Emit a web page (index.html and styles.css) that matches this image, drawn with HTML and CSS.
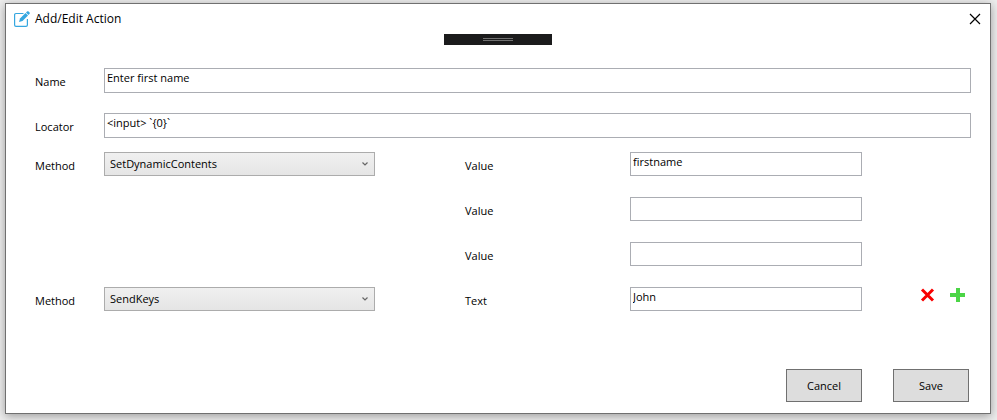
FILE: index.html
```html
<!DOCTYPE html>
<html lang="en">
<head>
<meta charset="utf-8">
<title>Add/Edit Action</title>
<link rel="stylesheet" href="styles.css">
</head>
<body>
<main class="window">
  <header class="titlebar">
    <svg class="app-icon" viewBox="0 0 16 16" aria-hidden="true">
      <path d="M9.5 2.5H2Q.6 2.5.6 3.500V14Q.6 15.400 2 15.400H12Q13.400 15.400 13.400 14V8" fill="none" stroke="#35a7e0" stroke-width="1.200"/>
      <path d="M5 11L6 7.500L11.500 2L14 4.500L8.500 10Z" fill="#35a7e0"/>
      <path d="M12 1.600L13.300.3Q14 0 14.700.6L15.600 1.500Q16 2.200 15.600 2.800L14.400 4Z" fill="#35a7e0"/>
    </svg>
    <h1 class="title">Add/Edit Action</h1>
    <button class="close" type="button" aria-label="Close">
      <svg viewBox="0 0 10 10" aria-hidden="true"><path d="M0 0L10 10M10 0L0 10" stroke="#000" stroke-width="1.200"/></svg>
    </button>
  </header>
  <div class="grip"><span class="grip-lines"></span></div>
  <form class="form">
    <div class="row wide">
      <label for="name">Name</label>
      <input id="name" type="text" value="Enter first name">
    </div>
    <div class="row wide locator">
      <label for="locator">Locator</label>
      <input id="locator" type="text" value="&lt;input&gt; `{0}`">
    </div>
    <div class="methods">
      <div class="row">
        <label for="method1">Method</label>
        <div class="combo">
          <select id="method1"><option>SetDynamicContents</option></select>
          <svg viewBox="0 0 6 4" aria-hidden="true"><path d="M.5 .5L3 3L5.500 .5" fill="none" stroke="#666" stroke-width="1.200"/></svg>
        </div>
        <label class="arg" for="value1">Value</label>
        <input id="value1" type="text" value="firstname">
      </div>
      <div class="row">
        <label class="arg" for="value2">Value</label>
        <input id="value2" type="text">
      </div>
      <div class="row">
        <label class="arg" for="value3">Value</label>
        <input id="value3" type="text">
      </div>
      <div class="row">
        <label for="method2">Method</label>
        <div class="combo">
          <select id="method2"><option>SendKeys</option></select>
          <svg viewBox="0 0 6 4" aria-hidden="true"><path d="M.5 .5L3 3L5.500 .5" fill="none" stroke="#666" stroke-width="1.200"/></svg>
        </div>
        <label class="arg" for="text">Text</label>
        <input id="text" type="text" value="John">
        <div class="tools">
          <button type="button" aria-label="Remove method">
            <svg viewBox="0 0 16 16" aria-hidden="true"><path d="M2 2.500L13 13.500M13 2.500L2 13.500" stroke="#f80000" stroke-width="3"/></svg>
          </button>
          <button type="button" aria-label="Add method">
            <svg viewBox="0 0 16 16" aria-hidden="true"><path d="M6 1H10V6H15V10H10V15H6V10H0V6H6Z" fill="#4bd546"/></svg>
          </button>
        </div>
      </div>
    </div>
    <footer class="actions">
      <button type="button">Cancel</button>
      <button type="submit">Save</button>
    </footer>
  </form>
</main>
</body>
</html>
```
FILE: styles.css
```css
* {
  box-sizing: border-box;
}

body {
  margin: 0;
  padding: 3px 6px 6px 5px;
  background: #ededed;
  color: #000;
  font: 11px/16px "Segoe UI", "Open Sans", "Noto Sans", sans-serif;
}

button,
input,
select {
  margin: 0;
  font: inherit;
  color: inherit;
  border-radius: 0;
}

.window {
  border: 1px solid #707070;
  background: #fff;
  box-shadow: 0 2px 9px rgba(0, 0, 0, 0.35);
}

.titlebar {
  display: flex;
  align-items: center;
  height: 30px;
  padding: 0 9px 0 8px;
}

.app-icon {
  width: 16px;
  height: 16px;
}

.title {
  flex: 1;
  margin: 0 0 0 5px;
  font-size: 12px;
  font-weight: 400;
}

.close {
  display: flex;
  padding: 0;
  border: 0;
  background: none;
}

.close svg {
  width: 12px;
  height: 12px;
  padding: 1px;
  overflow: visible;
}

.grip {
  display: flex;
  align-items: center;
  justify-content: center;
  width: 108px;
  height: 11px;
  margin: 0 auto;
  background: #1b1b1c;
}

.grip-lines {
  width: 30px;
  height: 3px;
  border: solid #707070;
  border-width: 1px 0;
}

.form {
  padding: 23px 19px 11px 29px;
}

.row {
  display: grid;
  grid-template-columns: 69px minmax(0, 271fr) 90px 165px minmax(0, 232fr) 109px;
  align-items: start;
}

.row.wide {
  grid-template-columns: 69px minmax(0, 1fr);
}

.locator {
  margin: 20px 0 14px;
}

.methods {
  display: grid;
  gap: 21px;
}

label {
  padding-top: 6px;
}

.arg {
  grid-column: 4;
}

input {
  width: 100%;
  height: 24px;
  padding: 0 2px 6px;
  border: 1px solid #abadb3;
  background: #fff;
}

.wide input {
  height: 25px;
  padding-bottom: 7px;
}

.combo {
  position: relative;
}

.combo select {
  display: block;
  width: 100%;
  height: 24px;
  padding: 0 20px 0 5px;
  border: 1px solid #acacac;
  background: linear-gradient(#f0f0f0, #e5e5e5);
  appearance: none;
}

.combo svg {
  position: absolute;
  top: 10px;
  right: 7px;
  width: 6px;
  height: 4px;
  pointer-events: none;
}

.tools {
  display: flex;
  justify-content: flex-end;
  gap: 14px;
  padding-right: 5px;
}

.tools button {
  display: flex;
  padding: 0;
  border: 0;
  background: none;
}

.tools svg {
  width: 16px;
  height: 16px;
}

.actions {
  display: flex;
  justify-content: flex-end;
  gap: 31px;
  margin-top: 58px;
  padding-right: 2px;
}

.actions button {
  width: 76px;
  height: 33px;
  padding: 0;
  border: 1px solid #707070;
  background: #ddd;
}
```
